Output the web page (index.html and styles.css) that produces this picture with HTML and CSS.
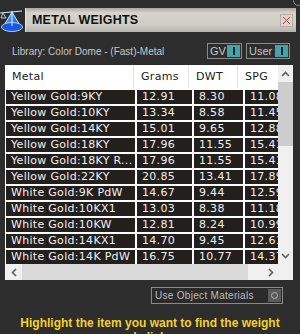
FILE: index.html
```html
<!DOCTYPE html>
<html>
<head>
<meta charset="utf-8">
<link rel="stylesheet" href="styles.css">
</head>
<body>
<div class="app">
  <span class="corner"></span>
  <div class="titlebar">
    <svg class="logo" width="25" height="27" viewBox="0 0 25 27">
      <defs>
        <linearGradient id="g1" x1="0" y1="0" x2="1" y2="1">
          <stop offset="0" stop-color="#6fc3ff"/>
          <stop offset="1" stop-color="#0a3fd0"/>
        </linearGradient>
      </defs>
      <path d="M12 6 L3 21 L21 21 Z" fill="url(#g1)" stroke="#bfe6ff" stroke-width="1"/>
      <ellipse cx="12" cy="21" rx="10.5" ry="4.5" fill="#1c55e0" stroke="#9fd4ff" stroke-width="1"/>
      <path d="M0 7 L22 5" stroke="#cfeaff" stroke-width="1.2"/>
      <path d="M3 7 L1 12 L6 12 Z" fill="none" stroke="#cfeaff" stroke-width="0.8"/>
      <path d="M12 5 L12 20" stroke="#e0f3ff" stroke-width="1"/>
    </svg>
    <div class="title">
      <span class="title-text">METAL WEIGHTS</span>
      <span class="close">
        <svg width="9" height="9" viewBox="0 0 9 9"><path d="M1 1 L8 8 M8 1 L1 8" stroke="#b04040" stroke-width="1"/></svg>
      </span>
    </div>
  </div>

  <div class="libbar">
    <span class="lib">Library: Color Dome - (Fast)-Metal</span>
    <span class="toggle gv"><span class="tlabel">GV</span><span class="tknob"><i></i></span></span>
    <span class="toggle user"><span class="tlabel">User</span><span class="tknob"><i></i></span></span>
  </div>

  <div class="panel">
    <div class="grid-area">
      <div class="table">
        <div class="row head">
          <span>Metal</span><span>Grams</span><span>DWT</span><span>SPG</span>
        </div>
        <div class="row"><span>Yellow Gold:9KY</span><span>12.91</span><span>8.30</span><span>11.08</span></div>
        <div class="row"><span>Yellow Gold:10KY</span><span>13.34</span><span>8.58</span><span>11.45</span></div>
        <div class="row"><span>Yellow Gold:14KY</span><span>15.01</span><span>9.65</span><span>12.88</span></div>
        <div class="row"><span>Yellow Gold:18KY</span><span>17.96</span><span>11.55</span><span>15.41</span></div>
        <div class="row"><span>Yellow Gold:18KY R...</span><span>17.96</span><span>11.55</span><span>15.41</span></div>
        <div class="row"><span>Yellow Gold:22KY</span><span>20.85</span><span>13.41</span><span>17.89</span></div>
        <div class="row"><span>White Gold:9K PdW</span><span>14.67</span><span>9.44</span><span>12.59</span></div>
        <div class="row"><span>White Gold:10KX1</span><span>13.03</span><span>8.38</span><span>11.18</span></div>
        <div class="row"><span>White Gold:10KW</span><span>12.81</span><span>8.24</span><span>10.99</span></div>
        <div class="row"><span>White Gold:14KX1</span><span>14.70</span><span>9.45</span><span>12.61</span></div>
        <div class="row"><span>White Gold:14K PdW</span><span>16.75</span><span>10.77</span><span>14.37</span></div>
      </div>
      <div class="vscroll">
        <span class="arrow"><svg width="9" height="6" viewBox="0 0 9 6"><path d="M1 5 L4.5 1.5 L8 5" fill="none" stroke="#606060" stroke-width="1.6"/></svg></span>
        <span class="vthumb"></span>
        <span class="vtrack"></span>
        <span class="arrow"><svg width="9" height="6" viewBox="0 0 9 6"><path d="M1 1 L4.5 4.5 L8 1" fill="none" stroke="#606060" stroke-width="1.6"/></svg></span>
      </div>
    </div>
    <div class="hscroll">
      <span class="harrow"><svg width="6" height="9" viewBox="0 0 6 9"><path d="M5 1 L1.5 4.5 L5 8" fill="none" stroke="#606060" stroke-width="1.6"/></svg></span>
      <span class="hthumb"></span>
      <span class="htrack"></span>
      <span class="harrow"><svg width="6" height="9" viewBox="0 0 6 9"><path d="M1 1 L4.5 4.5 L1 8" fill="none" stroke="#606060" stroke-width="1.6"/></svg></span>
      <span class="hcorner"></span>
    </div>
  </div>

  <div class="optrow">
    <div class="dropdown">
      <span class="dtext">Use Object Materials</span>
      <span class="dbtn"><i></i></span>
    </div>
  </div>

  <p class="hint">Highlight the item you want to find the weight<br>and click on</p>
</div>
</body>
</html>
```

FILE: styles.css
```css
html, body {
  margin: 0;
  padding: 0;
}
body {
  background: #2d2d2d;
  width: 300px;
  height: 334px;
  overflow: hidden;
}
.app {
  position: relative;
  width: 300px;
  height: 334px;
  overflow: hidden;
  font-family: "DejaVu Sans", Verdana, sans-serif;
}
.corner {
  position: absolute;
  right: -4px;
  top: -5px;
  width: 9px;
  height: 9px;
  border: 1px solid #8a8a8a;
  border-radius: 50%;
}
.titlebar {
  display: flex;
  align-items: stretch;
  margin-top: 6px;
  height: 27px;
}
.logo {
  flex: 0 0 25px;
}
.title {
  flex: 1;
  margin: 2px 4px 1px 0;
  display: flex;
  align-items: center;
  justify-content: space-between;
  background: linear-gradient(to bottom, #a9a8a0 0%, #d6d5cd 20%, #cecdc5 70%, #b5b4ac 100%);
  border-left: 1px solid #e6e5dd;
  padding: 0 3px 0 6px;
}
.title-text {
  font-family: "Liberation Sans", Arial, sans-serif;
  font-weight: bold;
  font-size: 12.5px;
  color: #111;
  letter-spacing: 0.2px;
}
.close {
  width: 11px;
  height: 11px;
  display: flex;
  align-items: center;
  justify-content: center;
  background: #dcd4cc;
  border: 1px solid #b8b0a8;
}
.libbar {
  display: flex;
  align-items: center;
  height: 16px;
  margin-top: 10px;
  padding: 0 10px 0 12px;
}
.lib {
  flex: 1;
  font-family: "Liberation Sans", Arial, sans-serif;
  font-size: 10px;
  color: #c8c8c8;
}
.toggle {
  box-sizing: border-box;
  display: flex;
  align-items: center;
  justify-content: space-between;
  height: 16px;
  border: 1px solid #8a8a8a;
  padding: 0 1px 0 2px;
}
.toggle.gv {
  width: 35px;
}
.toggle.user {
  width: 44px;
  margin-left: 4px;
}
.tlabel {
  font-family: "Liberation Sans", Arial, sans-serif;
  font-size: 11px;
  color: #c8c8c8;
}
.tknob {
  width: 13px;
  height: 12px;
  background: #45a3ab;
  display: flex;
  align-items: center;
  justify-content: center;
}
.tknob i {
  width: 2px;
  height: 8px;
  background: #1a2a30;
}
.panel {
  margin: 6px 7px 0 5px;
  background: #ffffff;
  padding-left: 1px;
}
.grid-area {
  display: flex;
}
.table {
  width: 272px;
  overflow: hidden;
  display: flex;
  flex-direction: column;
  gap: 2px;
  background: #ffffff;
}
.row {
  display: grid;
  grid-template-columns: 129px 55px 49px 40px;
  column-gap: 2px;
  height: 14px;
  font-size: 11px;
  line-height: 14px;
  color: #f0f0f0;
  letter-spacing: 0.3px;
}
.row span {
  background: #231f1c;
  padding-left: 5px;
  white-space: nowrap;
  overflow: hidden;
}
.row.head {
  height: 23px;
  line-height: 24px;
  color: #222;
  column-gap: 0;
}
.row.head span {
  background: #ffffff;
  border-right: 1px solid #e3e3e3;
  margin-right: 1px;
  padding-left: 6px;
}
.row.head span:last-child {
  border-right: none;
}
.vscroll {
  width: 15px;
  display: flex;
  flex-direction: column;
  background: #f0f0f0;
}
.arrow {
  height: 17px;
  display: flex;
  align-items: center;
  justify-content: center;
}
.vthumb {
  height: 64px;
  background: #cdcdcd;
}
.vtrack {
  flex: 1;
}
.hscroll {
  display: flex;
  height: 16px;
  background: #f0f0f0;
  align-items: center;
}
.harrow {
  width: 15px;
  height: 16px;
  display: flex;
  align-items: center;
  justify-content: center;
}
.hthumb {
  width: 226px;
  height: 16px;
  margin-left: 1px;
  background: #dadada;
}
.htrack {
  flex: 1;
}
.hcorner {
  width: 15px;
}
.optrow {
  display: flex;
  justify-content: flex-end;
  padding: 7px 17px 0 0;
}
.dropdown {
  width: 127px;
  height: 15px;
  border: 1px solid #8a8a8a;
  display: flex;
  align-items: center;
  justify-content: space-between;
  padding-left: 3px;
  background: #2a2a2a;
}
.dtext {
  font-family: "Liberation Sans", Arial, sans-serif;
  font-size: 10px;
  color: #bdbdbd;
  letter-spacing: 0.3px;
}
.dbtn {
  width: 13px;
  height: 13px;
  margin-right: 1px;
  background: #5a5a5a;
  display: flex;
  align-items: center;
  justify-content: center;
}
.dbtn i {
  width: 5px;
  height: 5px;
  border: 1px solid #b0b0b0;
  border-radius: 50%;
}
.hint {
  margin: 12px 0 0 0;
  text-align: center;
  font-family: "Liberation Sans", Arial, sans-serif;
  font-weight: bold;
  font-size: 12px;
  line-height: 14px;
  color: #f2d22a;
}
```
